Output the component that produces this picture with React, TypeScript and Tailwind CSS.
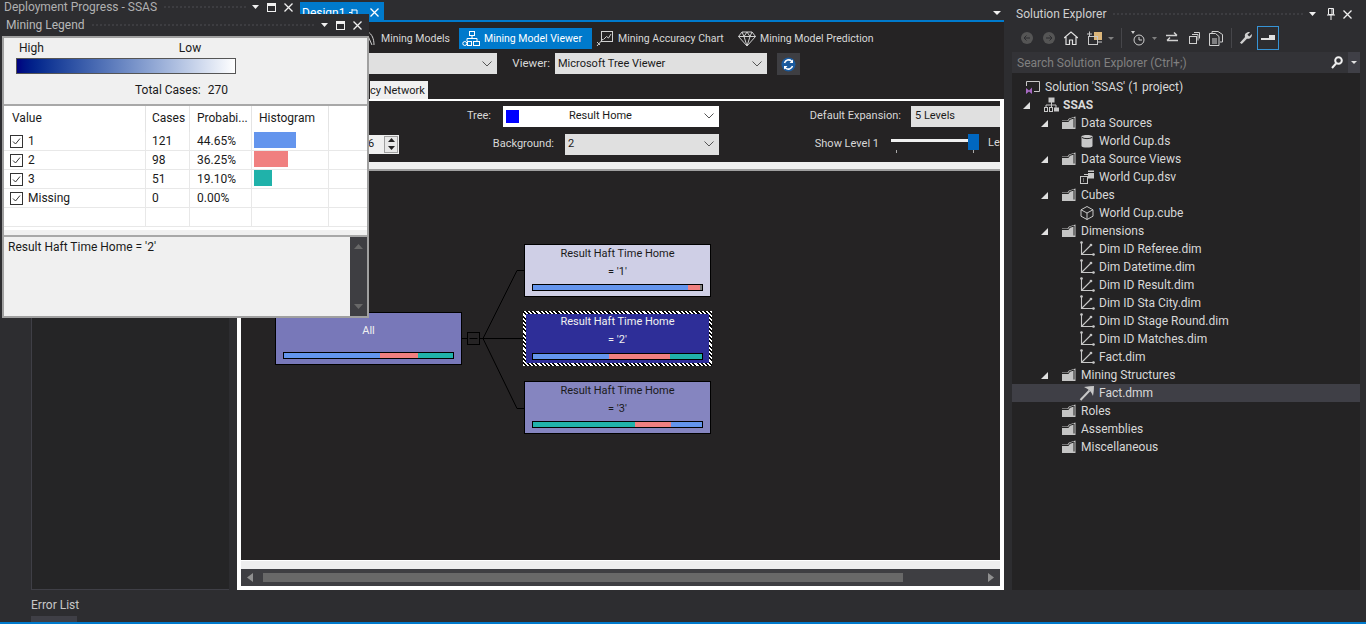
import React from "react";

function Folder() {
  return (
    <svg width="16" height="16" viewBox="0 0 16 16" className="shrink-0">
      <path d="M1 5.500h5.500L8 3.500 14.500 1.500V14H1z" fill="#c4c4c4" />
      <path d="M8.500 4.500l4.500-1.500v9.500" fill="none" stroke="#232323" strokeWidth="1" />
      <path d="M1 6.500h6.500l1-2" fill="none" stroke="#232323" strokeWidth="1" />
    </svg>
  );
}
function DimIcon() {
  return (
    <svg width="16" height="16" viewBox="0 0 16 16" className="shrink-0" fill="none" stroke="#c8c8c8" strokeWidth="1.100">
      <path d="M2.500 1.500V13.500H14" />
      <path d="M2.500 13.500L11.500 4.500" />
      <circle cx="2.500" cy="1.500" r=".8" fill="#c8c8c8" />
      <circle cx="14.500" cy="13.500" r=".8" fill="#c8c8c8" />
      <circle cx="12" cy="4" r=".8" fill="#c8c8c8" />
    </svg>
  );
}
function TreeIcon({ kind }: { kind: string }) {
  if (kind === "folder") return <Folder />;
  if (kind === "dim") return <DimIcon />;
  if (kind === "sol")
    return (
      <svg width="16" height="16" viewBox="0 0 16 16" className="shrink-0" fill="none">
        <path d="M1.500 7V2.500h13V12.500H9" stroke="#c8c8c8" />
        <path d="M1 9l3 2.500L7 8.500v6.500l-3-2.500L1 15z" fill="#a86bc4" />
      </svg>
    );
  if (kind === "proj")
    return (
      <svg width="16" height="16" viewBox="0 0 16 16" className="shrink-0" fill="none" stroke="#c8c8c8">
        <rect x="6" y="1" width="5" height="4" fill="#c8c8c8" />
        <path d="M8.500 5V8M3 11V8h10v3M8.500 8v3" />
        <rect x="1.500" y="10.500" width="3" height="4" />
        <rect x="6.500" y="10.500" width="3" height="4" />
        <rect x="11.500" y="11" width="4" height="3" fill="#c8c8c8" />
      </svg>
    );
  if (kind === "ds")
    return (
      <svg width="16" height="16" viewBox="0 0 16 16" className="shrink-0">
        <path d="M2.500 3.500C2.500 1.500 13.500 1.500 13.500 3.500V13C13.500 15 2.500 15 2.500 13z" fill="#c8c8c8" />
        <path d="M3 4.500C5 6 11 6 13 4.500" stroke="#232323" fill="none" />
      </svg>
    );
  if (kind === "dsv")
    return (
      <svg width="16" height="16" viewBox="0 0 16 16" className="shrink-0" fill="none" stroke="#c8c8c8">
        <rect x="1.500" y="7.500" width="7" height="7" />
        <path d="M4 10h1M4 12h1" />
        <path d="M5 5.500h4" />
        <rect x="9" y="1.500" width="6" height="8" fill="#c8c8c8" stroke="none" />
        <path d="M9 3.500h6" stroke="#232323" />
      </svg>
    );
  if (kind === "cube")
    return (
      <svg width="16" height="16" viewBox="0 0 16 16" className="shrink-0" fill="none" stroke="#c8c8c8">
        <path d="M8 1.500l6 3.300v6.400l-6 3.300-6-3.300V4.800zM2 4.800L8 8l6-3.200M8 8v6.500" />
      </svg>
    );
  return (
    <svg width="16" height="16" viewBox="0 0 16 16" className="shrink-0" fill="none">
      <path d="M1.500 15L10.500 5.500" stroke="#c8c8c8" strokeWidth="2" />
      <path d="M5 2Q11 1 15 1 15 6 14 11 12 5 5 2z" fill="#c8c8c8" />
    </svg>
  );
}

const tree: { t: string; d: number; k: string; o?: boolean; b?: boolean; s?: boolean }[] = [
  { t: "Solution 'SSAS' (1 project)", d: 0, k: "sol" },
  { t: "SSAS", d: 1, k: "proj", o: true, b: true },
  { t: "Data Sources", d: 2, k: "folder", o: true },
  { t: "World Cup.ds", d: 3, k: "ds" },
  { t: "Data Source Views", d: 2, k: "folder", o: true },
  { t: "World Cup.dsv", d: 3, k: "dsv" },
  { t: "Cubes", d: 2, k: "folder", o: true },
  { t: "World Cup.cube", d: 3, k: "cube" },
  { t: "Dimensions", d: 2, k: "folder", o: true },
  { t: "Dim ID Referee.dim", d: 3, k: "dim" },
  { t: "Dim Datetime.dim", d: 3, k: "dim" },
  { t: "Dim ID Result.dim", d: 3, k: "dim" },
  { t: "Dim ID Sta City.dim", d: 3, k: "dim" },
  { t: "Dim ID Stage Round.dim", d: 3, k: "dim" },
  { t: "Dim ID Matches.dim", d: 3, k: "dim" },
  { t: "Fact.dim", d: 3, k: "dim" },
  { t: "Mining Structures", d: 2, k: "folder", o: true },
  { t: "Fact.dmm", d: 3, k: "pick", s: true },
  { t: "Roles", d: 2, k: "folder" },
  { t: "Assemblies", d: 2, k: "folder" },
  { t: "Miscellaneous", d: 2, k: "folder" },
];

function Expander() {
  return (
    <svg width="7" height="7" viewBox="0 0 7 7" className="shrink-0">
      <path d="M7 0v7H0z" fill="#e0e0e0" />
    </svg>
  );
}

function Row({ r }: { r: (typeof tree)[number] }) {
  const pad = ["pl-[13px]", "pl-[11px]", "pl-[29px]", "pl-[67px]"][r.d];
  return (
    <div className={`flex h-[18px] items-center ${pad} ${r.s ? "bg-[#3f3f46]" : ""}`}>
      {r.d === 1 || r.d === 2 ? <div className="flex w-[20px] shrink-0 items-center">{r.o ? <Expander /> : null}</div> : null}
      <TreeIcon kind={r.k} />
      <span className={`ml-[4px] whitespace-nowrap ${r.b ? "font-bold" : ""}`}>{r.t}</span>
    </div>
  );
}

function Combo({ className, children, white }: { className: string; children?: React.ReactNode; white?: boolean }) {
  return (
    <div className={`flex h-[21px] shrink-0 items-center justify-between pl-[3px] pr-[5px] text-[11px] text-[#1a1a1a] ${white ? "bg-white" : "bg-[#e0e0e0]"} ${className}`}>
      <div className="flex-1 whitespace-nowrap">{children}</div>
      <svg width="10" height="6" viewBox="0 0 10 6" fill="none" stroke="#555" strokeWidth="1"><path d="M.5.500l4.500 4.500 4.500-4.500" /></svg>
    </div>
  );
}

function WinBtns({ pin }: { pin?: boolean }) {
  return (
    <div className="flex shrink-0 items-center gap-[8px]">
      <svg width="7" height="4" viewBox="0 0 7 4"><path d="M0 0h7L3.500 4z" fill="#f0f0f0" /></svg>
      {pin ? (
        <svg className="ml-[3px]" width="8" height="12" viewBox="0 0 8 12" fill="none" stroke="#f0f0f0"><path d="M1.500.500h5v6h-5zM0 7h8M4 7v5M5 1v5" /></svg>
      ) : (
        <svg width="9" height="9" viewBox="0 0 9 9" fill="none" stroke="#f0f0f0"><rect x=".5" y=".5" width="8" height="8" /><path d="M0 2h9" strokeWidth="2" /></svg>
      )}
      <svg width="9" height="9" viewBox="0 0 9 9" stroke="#f0f0f0" strokeWidth="1.300"><path d="M.5.500l8 8M8.500.500l-8 8" /></svg>
    </div>
  );
}

function Grip() {
  return <div className="mx-[6px] h-[5px] flex-1 bg-[radial-gradient(#3e3e42_0.7px,transparent_0.8px)] bg-[length:4px_4px]" />;
}

function Bar({ parts }: { parts: [string, number][] }) {
  return (
    <div className="box-content flex h-[5px] w-[169px] border border-black">
      {parts.map(([c, w], i) => (
        <div key={i} className={c} style={{ width: w }} />
      ))}
    </div>
  );
}

function Node({ className, title, value, parts, hatched, inner }: { className: string; title: string; value?: string; parts: [string, number][]; hatched?: boolean; inner?: string }) {
  return (
    <div className={`absolute flex flex-col items-center text-[11px] ${className}`}>
      {hatched ? <div className={`absolute inset-[3px] ${inner}`} /> : null}
      <div className={`relative h-[18px] leading-[18px] ${hatched ? "mt-[2px]" : "mt-0"}`}>{title}</div>
      <div className="relative h-[18px] leading-[18px]">{value}</div>
      <div className={`absolute ${hatched ? "bottom-[6px] left-[9px]" : "bottom-[5px] left-[7px]"}`}><Bar parts={parts} /></div>
    </div>
  );
}

const legendRows: { v: string; c: string; p: string; bar?: string }[] = [
  { v: "1", c: "121", p: "44.65%", bar: "bg-[#6495ed] w-[42px]" },
  { v: "2", c: "98", p: "36.25%", bar: "bg-[#f08080] w-[34px]" },
  { v: "3", c: "51", p: "19.10%", bar: "bg-[#20b2aa] w-[18px]" },
  { v: "Missing", c: "0", p: "0.00%" },
];

function Legend() {
  return (
    <div className="absolute left-[2px] top-[14px] z-20 flex h-[304px] w-[367px] flex-col bg-[#2d2d30] text-[#1a1a1a]">
      <div className="flex h-[22px] shrink-0 items-center pl-[4px] pr-[7px] text-[#b8b8b8]">
        <span>Mining Legend</span>
        <Grip />
        <WinBtns />
      </div>
      <div className="flex flex-1 flex-col border-x-2 border-y-2 border-[#a0a0a0] bg-[#f0f0f0]">
        <div className="h-[68px] shrink-0 border-b-2 border-[#a8a8a8]">
          <div className="flex h-[20px] items-center pl-[15px]">
            <span>High</span>
            <span className="ml-[135px]">Low</span>
          </div>
          <div className="ml-[12px] h-[16px] w-[220px] border border-[#555] bg-gradient-to-r from-[#000080] to-white" />
          <div className="mt-[8px] flex pl-[131px]">
            <span>Total Cases:</span>
            <span className="ml-[7px]">270</span>
          </div>
        </div>
        <div className="h-[124px] shrink-0 overflow-hidden bg-white">
          <div className="flex h-[26px] items-center">
            <div className="h-full w-[142px] border-r border-[#e4e4e4] pl-[8px] leading-[25px]">Value</div>
            <div className="h-full w-[44px] border-r border-[#e4e4e4] pl-[6px] leading-[25px]">Cases</div>
            <div className="h-full w-[62px] border-r border-[#e4e4e4] pl-[7px] leading-[25px]">Probabi...</div>
            <div className="h-full w-[77px] border-r border-[#e4e4e4] pl-[7px] leading-[25px]">Histogram</div>
          </div>
          {legendRows.map((r) => (
            <div key={r.v} className="flex h-[19px] border-b border-[#e8e8e8]">
              <div className="flex w-[142px] items-center border-r border-[#e8e8e8] pl-[6px]">
                <svg width="13" height="13" viewBox="0 0 13 13" fill="none" stroke="#333"><rect x=".5" y=".5" width="12" height="12" /><path d="M3 6.500l2.500 2.500L10 3.500" /></svg>
                <span className="ml-[5px]">{r.v}</span>
              </div>
              <div className="flex w-[44px] items-center border-r border-[#e8e8e8] pl-[6px]">{r.c}</div>
              <div className="flex w-[62px] items-center border-r border-[#e8e8e8] pl-[7px]">{r.p}</div>
              <div className="flex w-[77px] items-start border-r border-[#e8e8e8] pl-[2px]">
                {r.bar ? <div className={`h-[16px] ${r.bar}`} /> : null}
              </div>
            </div>
          ))}
          <div className="flex h-[19px] border-b border-[#e8e8e8]">
            <div className="w-[142px] border-r border-[#e8e8e8]" />
            <div className="w-[44px] border-r border-[#e8e8e8]" />
            <div className="w-[62px] border-r border-[#e8e8e8]" />
            <div className="w-[77px] border-r border-[#e8e8e8]" />
          </div>
        </div>
        <div className="h-[5px] shrink-0 bg-[#f0f0f0]" />
        <div className="flex flex-1 border-t-2 border-[#a8a8a8]">
          <div className="flex-1 pl-[4px] pt-[2px]">Result Haft Time Home = '2'</div>
          <div className="flex w-[17px] flex-col items-center justify-between bg-[#3e3e42] py-[7px]">
            <svg width="9" height="5" viewBox="0 0 9 5"><path d="M4.500 0L9 5H0z" fill="#686868" /></svg>
            <svg width="9" height="5" viewBox="0 0 9 5"><path d="M0 0h9L4.500 5z" fill="#686868" /></svg>
          </div>
        </div>
      </div>
    </div>
  );
}

function Diagram() {
  return (
    <div className="relative h-[389px] shrink-0 bg-[#252324]">
      <svg width="260" height="200" className="absolute left-[220px] top-[70px]" fill="none" stroke="#000">
        <path d="M1 97.500h5M18.500 97.500h44.500" />
        <rect x="6.500" y="91.500" width="12" height="12" />
        <path d="M8.500 97.500h8" />
        <path d="M22 97.500L56 29.500h7M22 97.500L56 167.500h7" />
      </svg>
      <Node className="left-[34px] top-[141px] h-[53px] w-[187px] border border-black bg-[#7878b9] pt-[9px] text-[#f0f0f0]" title="All" parts={[["bg-[#6495ed]", 96], ["bg-[#f08080]", 38], ["bg-[#20b2aa]", 35]]} />
      <Node className="left-[283px] top-[73px] h-[53px] w-[187px] border border-black bg-[#cfcfe6] text-[#1a1a1a]" title="Result Haft Time Home" value="= '1'" parts={[["bg-[#6495ed]", 155], ["bg-[#f08080]", 12], ["bg-[#808080]", 2]]} />
      <Node className="left-[282px] top-[140px] h-[55px] w-[189px] bg-[repeating-linear-gradient(45deg,#ffffff_0,#ffffff_1.500px,#000000_1.500px,#000000_3px)] text-[#f0f0f0]" hatched inner="bg-[#2e2e98]" title="Result Haft Time Home" value="= '2'" parts={[["bg-[#6495ed]", 76], ["bg-[#f08080]", 61], ["bg-[#20b2aa]", 32]]} />
      <Node className="left-[283px] top-[210px] h-[53px] w-[187px] border border-black bg-[#8585c0] text-[#1a1a1a]" title="Result Haft Time Home" value="= '3'" parts={[["bg-[#20b2aa]", 102], ["bg-[#f08080]", 36], ["bg-[#6495ed]", 31]]} />
    </div>
  );
}

function ToolTab({ label, active, icon, w, gap }: { label: string; active?: boolean; icon: React.ReactNode; w: string; gap: string }) {
  return (
    <div className={`flex h-[21px] shrink-0 items-center text-[10.500px] ${w} ${gap} ${active ? "bg-[#007acc] text-white" : ""}`}>
      <div className="flex shrink-0 items-center">{icon}</div>
      <span className="whitespace-nowrap">{label}</span>
    </div>
  );
}

function Document() {
  return (
    <div className="flex w-[767px] shrink-0 flex-col">
      <div className="flex h-[20px] shrink-0 items-center justify-end pr-[3px] pt-[6px]">
        <svg width="8" height="4" viewBox="0 0 8 4"><path d="M0 0h8L4 4z" fill="#f0f0f0" /></svg>
      </div>
      <div className="h-[2px] shrink-0 bg-[#007acc]" />
      <div className="flex h-[77px] shrink-0 flex-col bg-[#252324] pl-[127px]">
        <div className="mt-[6px] flex h-[21px] items-center">
          <ToolTab w="w-[95px]" gap="gap-[5px] pl-[2px]" label="Mining Models" icon={<svg width="10" height="16" viewBox="0 0 10 16" fill="none" stroke="#d0d0d0"><path d="M2 1c4 2 6 7 6 13M2 5l4 9" /></svg>} />
          <ToolTab active w="w-[133px]" gap="gap-[4px] pl-[3px]" label="Mining Model Viewer" icon={<svg width="18" height="17" viewBox="0 0 18 17" fill="none" stroke="#fff"><rect x="7.500" y="1.500" width="5" height="4" /><path d="M10 5.500v3M5 11V8.500h10V11" /><rect x="11.500" y="11.500" width="6" height="4" /><rect x="5.500" y="11.500" width="4" height="4" /><circle cx="2.800" cy="13.500" r="2" /></svg>} />
          <ToolTab w="w-[142px]" gap="gap-[5px] pl-[4px]" label="Mining Accuracy Chart" icon={<svg width="17" height="17" viewBox="0 0 17 17" fill="none" stroke="#d0d0d0"><rect x="5.500" y="1.500" width="11" height="10" /><path d="M7.500 9.500l3-3 2 1.500 2.500-4M1 16l6-7M1 12l3 3" /></svg>} />
          <ToolTab w="w-[150px]" gap="gap-[4px] pl-[4px]" label="Mining Model Prediction" icon={<svg width="18" height="16" viewBox="0 0 18 16" fill="none" stroke="#d0d0d0"><path d="M4 1h10l3.500 4.500L9 15 .5 5.500zM.5 5.500h17M6 5.500L9 15l3-9.500M4 1l2 4.500L9 1l3 4.500L14 1" /></svg>} />
        </div>
        <div className="mt-[4px] flex h-[22px] items-start">
          <Combo className="w-[133px]" />
          <span className="h-[21px] w-[53px] shrink-0 text-right text-[11.500px] leading-[21px]">Viewer:</span>
          <Combo className="ml-[5px] w-[212px]">Microsoft Tree Viewer</Combo>
          <div className="ml-[10px] flex h-[22px] w-[23px] shrink-0 items-center justify-center bg-[#3e3e42]">
            <svg width="15" height="15" viewBox="0 0 15 15"><circle cx="7.500" cy="7.500" r="7" fill="#1a5a9e" /><path d="M3.500 6a4.300 4.300 0 0 1 7-2l1 1M11.500 9a4.300 4.300 0 0 1-7 2l-1-1" stroke="#fff" fill="none" strokeWidth="1.500" /><path d="M12 2.500V6H8.500zM3 12.500V9h3.500z" fill="#fff" /></svg>
          </div>
        </div>
        <div className="mt-[6px] flex h-[18px] pl-[6px]">
          <div className="h-[18px] w-[58px] overflow-hidden whitespace-nowrap bg-[#f0f0f0] pr-[4px] text-right text-[11px] leading-[19px] text-[#1a1a1a]">cy Network</div>
        </div>
      </div>
      <div className="flex h-[491px] shrink-0 flex-col border-x-4 border-t-2 border-b-4 border-white">
        <div className="h-[61px] shrink-0 bg-[#252324] text-[11px]">
          <div className="flex h-[30px] items-center">
            <span className="w-[250px] shrink-0 text-right">Tree:</span>
            <Combo white className="ml-[12px] w-[216px]">
              <div className="flex items-center">
                <div className="h-[13px] w-[13px] bg-[#0000ff]" />
                <span className="ml-[50px]">Result Home</span>
              </div>
            </Combo>
            <span className="w-[182px] shrink-0 text-right">Default Expansion:</span>
            <div className="ml-[10px] flex h-[21px] flex-1 items-center bg-[#e0e0e0] pl-[4px] text-[#1a1a1a]">5 Levels</div>
          </div>
          <div className="flex h-[26px] items-center">
            <div className="ml-[108px] flex h-[19px] w-[50px] shrink-0 items-center bg-[#f0f0f0] text-[#1a1a1a]">
              <span className="ml-[19px]">6</span>
              <div className="ml-auto mr-[1px] flex h-[17px] w-[14px] flex-col items-center justify-around border border-[#a0a0a0] bg-[#e8e8e8]">
                <svg width="7" height="4" viewBox="0 0 7 4"><path d="M3.500 0L7 4H0z" fill="#222" /></svg>
                <svg width="7" height="4" viewBox="0 0 7 4"><path d="M0 0h7L3.500 4z" fill="#222" /></svg>
              </div>
            </div>
            <span className="w-[155px] shrink-0 text-right">Background:</span>
            <Combo className="ml-[11px] w-[154px]">2</Combo>
            <span className="w-[160px] shrink-0 text-right">Show Level 1</span>
            <div className="relative ml-[12px] h-[24px] flex-1 overflow-hidden">
              <div className="absolute left-0 top-[7px] h-[3px] w-[80px] bg-[#f0f0f0]" />
              <div className="absolute left-[77px] top-[2px] h-[16px] w-[11px] bg-[#0067c0]" />
              <div className="absolute left-[5px] top-[18px] h-[3px] w-[1px] bg-[#aaa]" />
              <div className="absolute left-[82px] top-[18px] h-[3px] w-[1px] bg-[#aaa]" />
              <span className="absolute left-[97px] top-[3px]">Le</span>
            </div>
          </div>
        </div>
        <div className="h-[7px] shrink-0 bg-[#f0f0f0]" />
        <div className="h-[2px] shrink-0 bg-[#a0a0a0]" />
        <Diagram />
        <div className="h-[9px] shrink-0 border-t border-white bg-[#eeeeee]" />
        <div className="flex h-[17px] shrink-0 items-center bg-[#3e3e42] px-[6px]">
          <svg width="6" height="9" viewBox="0 0 6 9"><path d="M6 0v9L0 4.500z" fill="#909090" /></svg>
          <div className="ml-[10px] h-[9px] w-[640px] bg-[#686868]" />
          <svg className="ml-auto" width="6" height="9" viewBox="0 0 6 9"><path d="M0 0v9l6-4.500z" fill="#909090" /></svg>
        </div>
      </div>
    </div>
  );
}

function Explorer() {
  return (
    <div className="ml-[8px] flex w-[348px] shrink-0 flex-col bg-[#242324]">
      <div className="flex h-[26px] shrink-0 items-center bg-[#2d2d30] pl-[4px] pr-[8px] pt-[2px] text-[#d0d0d0]">
        <span>Solution Explorer</span>
        <Grip />
        <WinBtns pin />
      </div>
      <div className="flex h-[26px] shrink-0 items-start bg-[#2d2d30] pl-[9px]">
        <div className="flex h-[24px] items-center">
          <svg width="12" height="12" viewBox="0 0 12 12"><circle cx="6" cy="6" r="6" fill="#555" /><path d="M9 6H3M5.500 3.500L3 6l2.500 2.500" stroke="#2d2d30" fill="none" /></svg>
          <svg className="ml-[10px]" width="12" height="12" viewBox="0 0 12 12"><circle cx="6" cy="6" r="6" fill="#555" /><path d="M3 6h6M6.500 3.500L9 6 6.500 8.500" stroke="#2d2d30" fill="none" /></svg>
          <svg className="ml-[9px]" width="14" height="14" viewBox="0 0 14 14" fill="none" stroke="#e0e0e0" strokeWidth="1.200"><path d="M0 7l7-6 7 6M2 6v7.500h3.500V9h3v4.500H12V6" /></svg>
          <svg className="ml-[9px]" width="15" height="15" viewBox="0 0 15 15" fill="none"><path d="M7 1h8v8H7z" fill="#dcb67a" /><rect x="1.500" y="5.500" width="9" height="8" stroke="#c8c8c8" /><path d="M0 3h5M2.500 0.500v5M11 11h4" stroke="#c8c8c8" /></svg>
          <svg className="ml-[6px]" width="6" height="3" viewBox="0 0 6 3"><path d="M0 0h6L3 3z" fill="#808080" /></svg>
          <div className="ml-[7px] h-[20px] w-[1px] bg-[#46464a]" />
          <svg className="ml-[9px]" width="14" height="16" viewBox="0 0 14 16" fill="none" stroke="#d0d0d0"><circle cx="8" cy="10" r="5" /><path d="M8 7v3h3" /><path d="M0 1h4L2 4z" fill="#d0d0d0" stroke="none" /></svg>
          <svg className="ml-[7px]" width="5" height="3" viewBox="0 0 5 3"><path d="M0 0h5L2.500 3z" fill="#808080" /></svg>
          <svg className="ml-[9px]" width="12" height="12" viewBox="0 0 12 12" fill="none" stroke="#d0d0d0" strokeWidth="1.500"><path d="M0 3.500h11M8 .500l3 3M12 8.500H1M4 5.500l-3 3" /></svg>
          <svg className="ml-[11px]" width="11" height="12" viewBox="0 0 11 12" fill="none" stroke="#d0d0d0"><rect x=".5" y="4.500" width="7" height="7" /><path d="M3 2.500h6v6M5 .500h5.500v6" /></svg>
          <svg className="ml-[9px]" width="14" height="15" viewBox="0 0 14 15" fill="none" stroke="#d0d0d0"><path d="M3 2V.500h6l4.500 3V11H11M.5 2.500h6l3.500 3v9H.5zM3 8h5M3 10h5M3 12h5" /></svg>
          <div className="ml-[8px] h-[20px] w-[1px] bg-[#46464a]" />
          <svg className="ml-[7px]" width="14" height="14" viewBox="0 0 15 15"><path d="M1 12.500L6.500 6.500c-1-3 1-5.500 4.500-5.500l.8.300L9 4l2 2 2.800-2.800c.5 3.300-2.300 5.800-5.300 5L3 14z" fill="#d0d0d0" /></svg>
          <div className="ml-[4px] flex h-[24px] w-[22px] items-center justify-center border border-[#3794d6]">
            <svg width="14" height="6" viewBox="0 0 14 6"><path d="M0 3h14v2H0zM8 0h6v4H8z" fill="#e0e0e0" /></svg>
          </div>
        </div>
      </div>
      <div className="flex h-[21px] shrink-0 items-center justify-between bg-[#333337] pl-[5px] text-[#808080]">
        <span>Search Solution Explorer (Ctrl+;)</span>
        <div className="flex h-full items-center">
          <svg width="12" height="13" viewBox="0 0 12 13" fill="none" stroke="#f0f0f0" strokeWidth="2"><circle cx="7.500" cy="4.500" r="3.300" /><path d="M5 7.500L1 12" /></svg>
          <div className="ml-[5px] flex h-full w-[12px] items-center justify-center bg-[#3f3f46]">
            <svg width="6" height="3" viewBox="0 0 6 3"><path d="M0 0h6L3 3z" fill="#e0e0e0" /></svg>
          </div>
        </div>
      </div>
      <div className="flex-1 pt-[5px] text-[#d8d8d8]">
        {tree.map((r) => (
          <Row key={r.t} r={r} />
        ))}
      </div>
    </div>
  );
}

export default function App() {
  return (
    <div className="relative flex h-[624px] w-[1366px] flex-col overflow-hidden bg-[#2d2d30] font-['Roboto','Liberation_Sans',sans-serif] text-[12px] leading-[16px] text-[#d8d8d8]">
      <div className="flex h-[590px] shrink-0">
        <div className="ml-[31px] mt-[300px] h-[290px] w-[198px] shrink-0 border border-r-0 border-t-0 border-[#3f3f46] bg-[#252526]" />
        <div className="w-[8px] shrink-0" />
        <Document />
        <Explorer />
      </div>
      <div className="flex h-[34px] flex-col">
        <div className="ml-[31px] mt-[7px] h-[16px] text-[#c8c8c8]">Error List</div>
        <div className="ml-[31px] mt-[3px] h-[6px] w-[46px] shrink-0 bg-[#3f3f46]" />
        <div className="h-[2px] shrink-0 bg-[#007acc]" />
      </div>
      <div className="absolute left-0 top-0 z-10 flex h-[14px] w-[299px] items-center bg-[#2d2d30] pl-[4px] pr-[6px] text-[#b0b0b0]">
        <span className="whitespace-nowrap">Deployment Progress - SSAS</span>
        <Grip />
        <WinBtns />
      </div>
      <div className="absolute left-[300px] top-[2px] z-10 flex h-[20px] w-[84px] items-start overflow-hidden bg-[#007acc] pl-[2px] pt-[3px] text-white">
        <span>Design1</span>
        <svg className="ml-[4px] mt-[3px]" width="9" height="9" viewBox="0 0 9 9" stroke="#fff" fill="none"><path d="M0 4.500h3M3 1v7M3 2h5v5H3" /></svg>
        <svg className="ml-[12px] mt-[3px]" width="9" height="9" viewBox="0 0 9 9" stroke="#fff" strokeWidth="1.300"><path d="M.5.500l8 8M8.500.500l-8 8" /></svg>
      </div>
      <Legend />
    </div>
  );
}
